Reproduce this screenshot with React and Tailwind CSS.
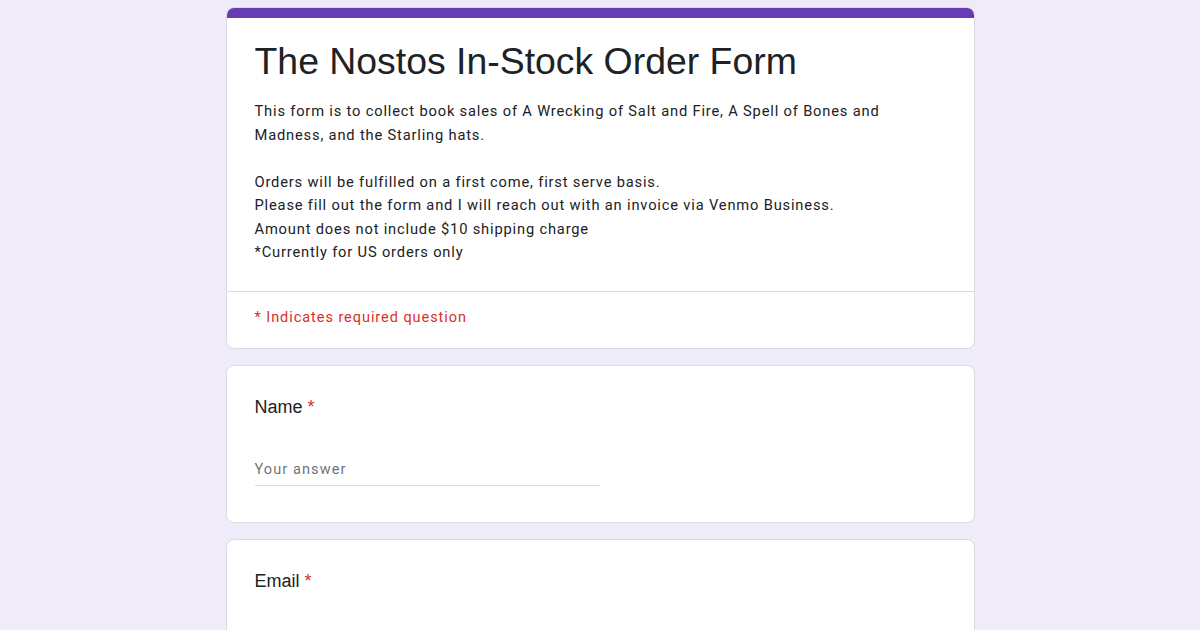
import React from 'react';

const font = { fontFamily: 'Roboto, Arial, sans-serif' };
const arial = { fontFamily: '"Liberation Sans", Arial, sans-serif' };

const Question = ({ label }) => (
  <div className="bg-white border border-[#dadce0] rounded-lg px-7 pt-[29px] pb-[36px]">
    <div className="text-[18px] leading-6 text-[#202124]" style={arial}>
      {label} <span className="text-[#d93025]">*</span>
    </div>
    <div className="mt-[41px] w-[345px] border-b border-[#dadce0] pb-[5px]">
      <div className="text-[14.5px] leading-5 text-[#70757a] tracking-[1.1px]">Your answer</div>
    </div>
  </div>
);

export default function App() {
  return (
    <div className="h-[630px] bg-[#f0ebf8] pt-[7px] overflow-hidden" style={font}>
      <div className="w-[749px] mx-auto flex flex-col gap-4">
        {/* Header */}
        <div className="bg-white rounded-lg border border-[#dadce0] overflow-hidden">
          <div className="h-[11px] bg-[#673ab7] -mx-px -mt-px"></div>
          <div className="px-7 pt-[23px] pb-[26px]">
            <h1 className="text-[37.4px] leading-10 text-[#202124]" style={arial}>The Nostos In-Stock Order Form</h1>
            <div className="mt-[19px] text-[14.7px] leading-[23.5px] text-[#202124] tracking-[.82px]">
              <p>This form is to collect book sales of A Wrecking of Salt and Fire, A Spell of Bones and Madness, and the Starling hats.</p>
              <p className="mt-[23.5px]">Orders will be fulfilled on a first come, first serve basis.</p>
              <p>Please fill out the form and I will reach out with an invoice via Venmo Business.</p>
              <p>Amount does not include $10 shipping charge</p>
              <p>*Currently for US orders only</p>
            </div>
          </div>
          <div className="border-t border-[#dadce0] px-7 pt-4 pb-5 text-[14.5px] leading-5 text-[#d93025] tracking-[.95px]">
            * Indicates required question
          </div>
        </div>

        <Question label="Name" />
        <Question label="Email" />
      </div>
    </div>
  );
}
